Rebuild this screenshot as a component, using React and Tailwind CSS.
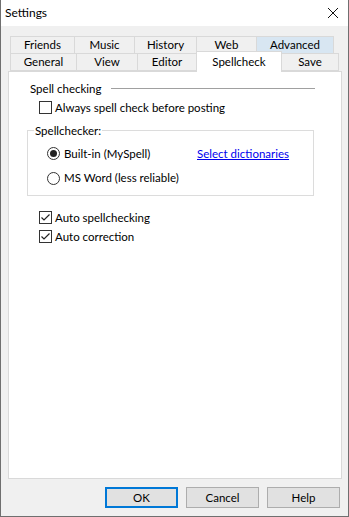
import React from 'react';

const topTabs = [
  { label: 'Friends', w: 'w-[65px]' },
  { label: 'Music', w: 'w-[61px]' },
  { label: 'History', w: 'w-[63px]' },
  { label: 'Web', w: 'w-[61px]' },
  { label: 'Advanced', w: 'w-[78px]', hover: true },
];

const Checkbox = ({ checked, label }) => (
  <label className="flex items-center gap-[3px] h-[17px]">
    <span className="w-[13px] h-[13px] border border-[#333333] bg-white flex items-center justify-center">
      {checked && (
        <svg width="11" height="11" viewBox="0 0 11 11">
          <path d="M1.5 5.5 L4 8 L9.5 2.5" fill="none" stroke="#222" strokeWidth="1.2" />
        </svg>
      )}
    </span>
    <span>{label}</span>
  </label>
);

const Radio = ({ checked, label }) => (
  <label className="flex items-center gap-[4px] h-[17px]">
    <span className="w-[13px] h-[13px] rounded-full border border-[#333333] bg-white flex items-center justify-center">
      {checked && <span className="w-[7px] h-[7px] rounded-full bg-[#222222]" />}
    </span>
    <span>{label}</span>
  </label>
);

const Button = ({ children, primary }) => (
  <button
    className={`w-[73px] h-[21px] bg-[#e1e1e1] flex items-center justify-center ${
      primary ? 'border-2 border-[#0078d7]' : 'border border-[#adadad]'
    }`}
  >
    {children}
  </button>
);

export default function App() {
  return (
    <div
      className="w-[349px] h-[517px] flex flex-col border-l border-r border-b border-[#6f6f6f] text-[11.5px] text-black overflow-hidden"
      style={{ fontFamily: '"Segoe UI", Lato, "Liberation Sans", sans-serif' }}
    >
      {/* Title bar */}
      <div className="h-[26px] bg-white flex items-center justify-between pl-[4px] pr-[4px] shrink-0">
        <span className="text-[12px]">Settings</span>
        <svg width="12" height="12" viewBox="0 0 12 12" className="mr-[5px]">
          <path d="M1 1 L11 11 M11 1 L1 11" stroke="#111" strokeWidth="1" />
        </svg>
      </div>

      {/* Body */}
      <div className="flex-1 bg-[#f0f0f0] flex flex-col">
        <div className="pl-[9px] pt-[10px]">
          <div className="flex h-[17px]">
            {topTabs.map((t) => (
              <div
                key={t.label}
                className={`${t.w} h-[18px] -mr-px flex items-center justify-center border border-[#d9d9d9] ${
                  t.hover ? 'bg-[#d8e6f2]' : 'bg-[#f0f0f0]'
                }`}
              >
                {t.label}
              </div>
            ))}
          </div>
          <div className="flex h-[18px] items-end">
            <div className="w-[67px] h-[18px] -mr-px flex items-center justify-center border border-[#d9d9d9] bg-[#f0f0f0]">General</div>
            <div className="w-[62px] h-[18px] -mr-px flex items-center justify-center border border-[#d9d9d9] bg-[#f0f0f0]">View</div>
            <div className="w-[60px] h-[18px] -mr-px flex items-center justify-center border border-[#d9d9d9] bg-[#f0f0f0]">Editor</div>
            <div className="relative z-10 w-[86px] h-[21px] -mb-px -mr-px flex items-start justify-center pt-[1px] border border-b-0 border-[#d9d9d9] bg-white">
              Spellcheck
            </div>
            <div className="w-[58px] h-[18px] flex items-center justify-center border border-[#d9d9d9] bg-[#f0f0f0]">Save</div>
          </div>
        </div>

        {/* Panel */}
        <div className="ml-[7px] w-[334px] h-[408px] bg-white border border-[#d9d9d9] pl-[21px] pt-[8px]">
          <div className="flex items-center h-[17px] mr-[26px]">
            <span>Spell checking</span>
            <div className="ml-[10px] flex-1 h-px bg-[#a0a0a0]" />
          </div>
          <div className="ml-[9px] mt-[2px]">
            <Checkbox label="Always spell check before posting" />
          </div>

          <fieldset className="mt-[6px] -ml-[3px] w-[287px] h-[74px] border border-[#dcdcdc] px-[7px] pt-0 pb-0">
            <legend className="px-px -ml-[1px]">Spellchecker:</legend>
            <div className="flex items-center mt-[6px] ml-[12px]">
              <div className="w-[150px]">
                <Radio checked label="Built-in (MySpell)" />
              </div>
              <span className="text-[#0000ee] underline">Select dictionaries</span>
            </div>
            <div className="mt-[7px] ml-[12px]">
              <Radio label="MS Word (less reliable)" />
            </div>
          </fieldset>

          <div className="ml-[9px] mt-[13px] flex flex-col gap-[2px]">
            <Checkbox checked label="Auto spellchecking" />
            <Checkbox checked label="Auto correction" />
          </div>
        </div>

        {/* Buttons */}
        <div className="flex justify-end gap-[8px] pr-[8px] mt-[8px]">
          <Button primary>OK</Button>
          <Button>Cancel</Button>
          <Button>Help</Button>
        </div>
      </div>
    </div>
  );
}
